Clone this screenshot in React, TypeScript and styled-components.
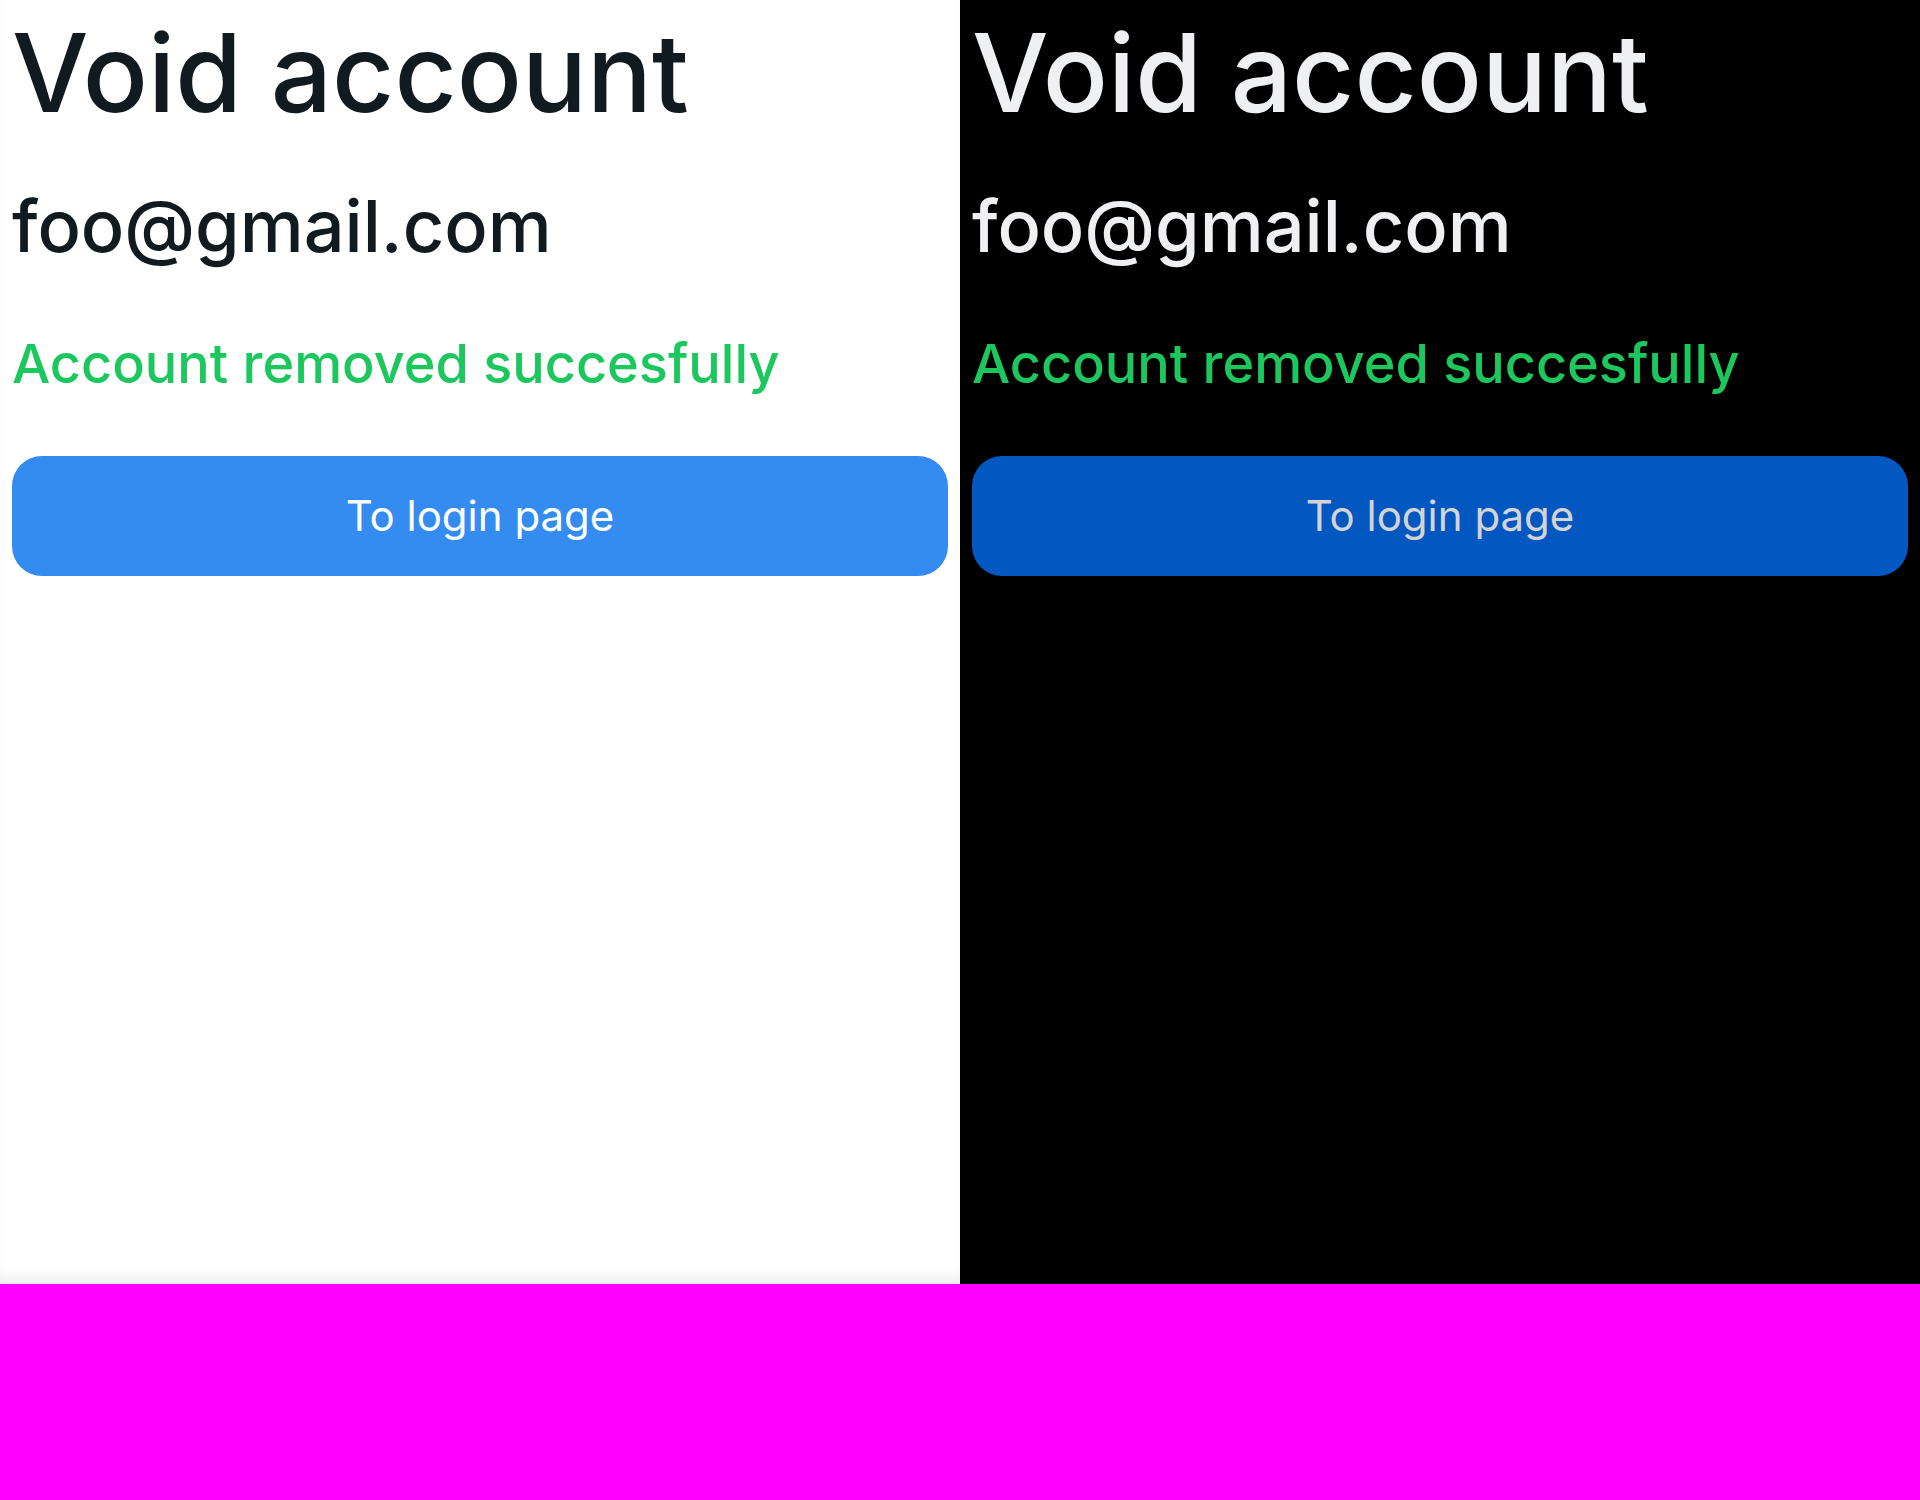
import React from 'react';
import styled, { createGlobalStyle } from 'styled-components';

const GlobalStyle = createGlobalStyle`
  html, body {
    margin: 0;
    padding: 0;
    background: #ff00ff;
  }

  body {
    font-family: Inter, 'Noto Sans', sans-serif;
  }
`;

const Row = styled.div`
  display: grid;
  grid-template-columns: 1fr 1fr;
  height: 1284px;
`;

const Panel = styled.div<{ $dark?: boolean }>`
  display: flex;
  flex-direction: column;
  padding: 8px 12px;
  background: ${(p) => (p.$dark ? '#000000' : '#ffffff')};
  color: ${(p) => (p.$dark ? '#eef0f2' : '#111a1f')};
  box-shadow: ${(p) => (p.$dark ? 'none' : 'inset 0 -14px 18px -12px rgba(0, 0, 0, 0.12)')};
`;

const Title = styled.h1`
  margin: 0;
  font-size: 108px;
  font-weight: 500;
  line-height: 1.2;
`;

const Email = styled.div`
  margin-top: 45px;
  font-size: 72px;
  font-weight: 500;
  line-height: 1.2;
`;

const Success = styled.div`
  margin-top: 63px;
  font-size: 54px;
  font-weight: 500;
  line-height: 1.2;
  color: #1cc75e;
`;

const LoginButton = styled.button<{ $dark?: boolean }>`
  margin-top: 59px;
  height: 120px;
  width: 100%;
  border: none;
  border-radius: 30px;
  font-family: Inter, 'Noto Sans', sans-serif;
  font-size: 42px;
  background: ${(p) => (p.$dark ? '#0258c0' : '#348bf0')};
  color: ${(p) => (p.$dark ? '#d4d4d6' : '#ffffff')};
  cursor: pointer;
`;

const VoidAccount = ({ dark }: { dark?: boolean }) => (
  <Panel $dark={dark}>
    <Title>Void account</Title>
    <Email>foo@gmail.com</Email>
    <Success>Account removed succesfully</Success>
    <LoginButton $dark={dark}>To login page</LoginButton>
  </Panel>
);

export default function App() {
  return (
    <>
      <GlobalStyle />
      <Row>
        <VoidAccount />
        <VoidAccount dark />
      </Row>
    </>
  );
}
